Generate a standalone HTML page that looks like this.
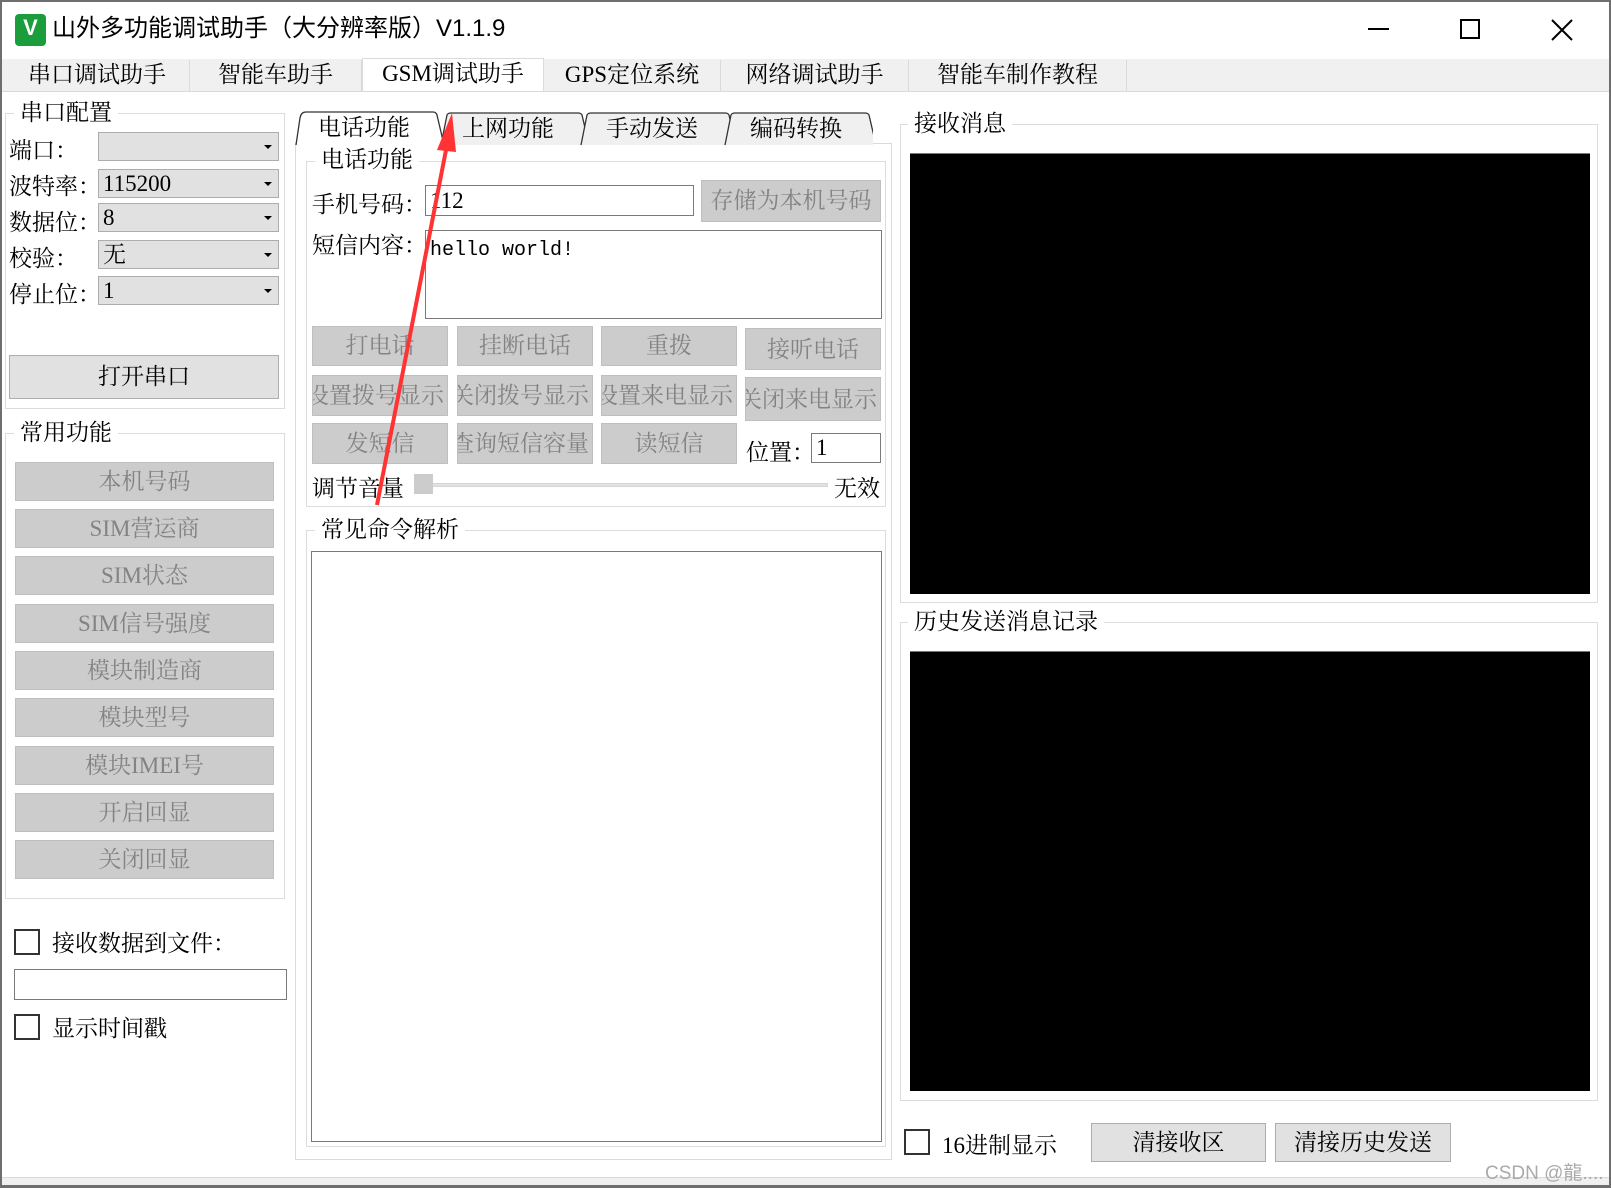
<!DOCTYPE html>
<html><head><meta charset="utf-8"><style>
*{box-sizing:border-box;margin:0;padding:0}
body{width:1611px;height:1188px;position:relative;background:#fff;overflow:hidden;font-family:"Liberation Serif","Noto Serif CJK SC",serif;font-size:23px;color:#000}
.a{position:absolute;white-space:nowrap}
.grp{position:absolute;border:1px solid #dcdcdc}
.gl{position:absolute;background:#fff;padding:0 6px;line-height:26px;font-size:23px}
.cb{position:absolute;background:#e1e1e1;border:1px solid #adadad;height:29px;left:98px;width:181px;line-height:27px;padding-left:4px;font-size:23px}
.cb:after{content:"";position:absolute;right:6px;top:12px;border:4px solid transparent;border-top:4px solid #000}
.db{position:absolute;background:#cccccc;border:1px solid #bfbfbf;color:#838383;text-align:center;font-size:23px;overflow:hidden}
.bt{position:absolute;background:#e1e1e1;border:1px solid #adadad;text-align:center;font-size:23px}
.chk{position:absolute;width:26px;height:26px;border:2px solid #333;background:#fff}
.inp{position:absolute;border:1px solid #7a7a7a;background:#fff}
.tab{position:absolute;top:60px;height:31px;background:#f0f0f0;border-right:1px solid #dadada;text-align:center;line-height:30px;font-size:23px}
</style></head><body>
<div class="a" style="left:0;top:0;width:1611px;height:1188px;border:2px solid #6e6e6e;border-bottom-width:3px"></div>
<div class="a" style="left:2px;top:59px;width:1607px;height:33px;background:#f0f0f0"></div>
<div class="a" style="left:2px;top:1177px;width:1607px;height:8px;background:#f0f0f0;border-top:1px solid #dadada"></div>
<div class="a" style="left:15px;top:14px;width:31px;height:32px;background:#1a9d3a;border-radius:4px;color:#fff;font:bold 22px 'Liberation Sans';text-align:center;line-height:28px">V</div>
<div class="a" style="left:52px;top:12px;font-family:'Liberation Sans','Noto Sans CJK SC',sans-serif;font-size:24px;line-height:34px">山外多功能调试助手（大分辨率版）V1.1.9</div>
<div class="a" style="left:1368px;top:28px;width:21px;height:2px;background:#000"></div>
<div class="a" style="left:1460px;top:19px;width:20px;height:20px;border:2px solid #000"></div>
<svg class="a" style="left:1551px;top:19px" width="22" height="22"><path d="M1 1L21 21M21 1L1 21" stroke="#000" stroke-width="2"/></svg>
<div class="tab" style="left:5px;width:185px">串口调试助手</div>
<div class="tab" style="left:190px;width:172px">智能车助手</div>
<div class="tab" style="left:362px;top:58px;height:34px;width:182px;background:#fff;border:1px solid #dadada;border-bottom:none">GSM调试助手</div>
<div class="tab" style="left:544px;width:177px">GPS定位系统</div>
<div class="tab" style="left:721px;width:188px">网络调试助手</div>
<div class="tab" style="left:909px;width:218px">智能车制作教程</div>
<div class="a" style="left:2px;top:91px;width:1607px;height:1px;background:#dadada"></div>
<div class="grp" style="left:5px;top:113px;width:280px;height:296px"></div>
<div class="gl" style="left:14px;top:100px">串口配置</div>
<div class="a" style="left:9px;top:132px">端口：</div><div class="cb" style="top:132px"></div>
<div class="a" style="left:9px;top:168px">波特率：</div><div class="cb" style="top:169px">115200</div>
<div class="a" style="left:9px;top:204px">数据位：</div><div class="cb" style="top:203px">8</div>
<div class="a" style="left:9px;top:240px">校验：</div><div class="cb" style="top:240px">无</div>
<div class="a" style="left:9px;top:276px">停止位：</div><div class="cb" style="top:276px">1</div>
<div class="bt" style="left:9px;top:355px;width:270px;height:44px;line-height:42px">打开串口</div>
<div class="grp" style="left:5px;top:433px;width:280px;height:466px"></div>
<div class="gl" style="left:14px;top:420px">常用功能</div>
<div class="db" style="left:15px;top:462px;width:259px;height:39px;line-height:37px">本机号码</div>
<div class="db" style="left:15px;top:509px;width:259px;height:39px;line-height:37px">SIM营运商</div>
<div class="db" style="left:15px;top:556px;width:259px;height:39px;line-height:37px">SIM状态</div>
<div class="db" style="left:15px;top:604px;width:259px;height:39px;line-height:37px">SIM信号强度</div>
<div class="db" style="left:15px;top:651px;width:259px;height:39px;line-height:37px">模块制造商</div>
<div class="db" style="left:15px;top:698px;width:259px;height:39px;line-height:37px">模块型号</div>
<div class="db" style="left:15px;top:746px;width:259px;height:39px;line-height:37px">模块IMEI号</div>
<div class="db" style="left:15px;top:793px;width:259px;height:39px;line-height:37px">开启回显</div>
<div class="db" style="left:15px;top:840px;width:259px;height:39px;line-height:37px">关闭回显</div>
<div class="chk" style="left:14px;top:929px"></div><div class="a" style="left:52px;top:925px">接收数据到文件：</div>
<div class="inp" style="left:14px;top:969px;width:273px;height:31px"></div>
<div class="chk" style="left:14px;top:1014px"></div><div class="a" style="left:52px;top:1010px">显示时间戳</div>
<div class="a" style="left:295px;top:143px;width:597px;height:1017px;border:1px solid #dadada"></div>
<svg class="a" style="left:293px;top:110px" width="580" height="36">
<g fill="#f0f0f0" stroke="#333" stroke-width="1.3">
<path d="M148 35L154 5Q155 3 158 3H285Q288 3 289 5L296 35"/>
<path d="M288 35L294 5Q295 3 298 3H432Q435 3 436 5L443 35"/>
<path d="M432 35L438 5Q439 3 442 3H572Q575 3 576 5L583 35"/>
<path d="M3 35L7 8Q8 2 13 2H140Q143 2 144 5L151 35" fill="#fff"/>
</g></svg>
<div class="a" style="left:318px;top:109px">电话功能</div>
<div class="a" style="left:462px;top:110px">上网功能</div>
<div class="a" style="left:606px;top:110px">手动发送</div>
<div class="a" style="left:750px;top:110px">编码转换</div>
<div class="grp" style="left:306px;top:161px;width:580px;height:346px"></div>
<div class="gl" style="left:315px;top:147px">电话功能</div>
<div class="a" style="left:312px;top:186px">手机号码：</div>
<div class="inp" style="left:425px;top:185px;width:269px;height:31px;padding-left:4px;line-height:29px">112</div>
<div class="db" style="left:701px;top:180px;width:180px;height:42px;line-height:40px">存储为本机号码</div>
<div class="a" style="left:312px;top:227px">短信内容：</div>
<div class="inp" style="left:425px;top:230px;width:457px;height:89px;padding:8px 4px;font-family:'Liberation Mono',monospace;font-size:20px">hello world!</div>
<div class="db" style="left:312px;top:326px;width:136px;height:40px;line-height:38px">打电话</div>
<div class="db" style="left:457px;top:326px;width:136px;height:40px;line-height:38px">挂断电话</div>
<div class="db" style="left:601px;top:326px;width:136px;height:40px;line-height:38px">重拨</div>
<div class="db" style="left:745px;top:328px;width:136px;height:42px;line-height:42px">接听电话</div>
<div class="db" style="left:312px;top:375px;width:136px;height:41px;line-height:39px;text-indent:-10px">设置拨号显示</div>
<div class="db" style="left:457px;top:375px;width:136px;height:41px;line-height:39px;text-indent:-10px">关闭拨号显示</div>
<div class="db" style="left:601px;top:375px;width:136px;height:41px;line-height:39px;text-indent:-10px">设置来电显示</div>
<div class="db" style="left:745px;top:377px;width:136px;height:44px;line-height:44px;text-indent:-10px">关闭来电显示</div>
<div class="db" style="left:312px;top:423px;width:136px;height:41px;line-height:39px">发短信</div>
<div class="db" style="left:457px;top:423px;width:136px;height:41px;line-height:39px;text-indent:-10px">查询短信容量</div>
<div class="db" style="left:601px;top:423px;width:136px;height:41px;line-height:39px">读短信</div>
<div class="a" style="left:746px;top:434px">位置：</div>
<div class="inp" style="left:811px;top:433px;width:70px;height:30px;padding-left:4px;line-height:28px">1</div>
<div class="a" style="left:312px;top:470px">调节音量</div>
<div class="a" style="left:414px;top:483px;width:414px;height:4px;background:#e1e1e1;border:1px solid #d6d6d6"></div>
<div class="a" style="left:414px;top:474px;width:19px;height:20px;background:#cccccc"></div>
<div class="a" style="left:834px;top:470px">无效</div>
<div class="grp" style="left:306px;top:530px;width:580px;height:617px"></div>
<div class="gl" style="left:315px;top:517px">常见命令解析</div>
<div class="a" style="left:311px;top:551px;width:571px;height:591px;border:1px solid #7a7a7a"></div>
<div class="grp" style="left:900px;top:124px;width:698px;height:479px"></div>
<div class="gl" style="left:908px;top:111px">接收消息</div>
<div class="a" style="left:910px;top:153px;width:680px;height:441px;background:#000;border-top:1px solid #777"></div>
<div class="grp" style="left:900px;top:622px;width:698px;height:479px"></div>
<div class="gl" style="left:908px;top:609px">历史发送消息记录</div>
<div class="a" style="left:910px;top:651px;width:680px;height:440px;background:#000;border-top:1px solid #777"></div>
<div class="chk" style="left:904px;top:1129px"></div><div class="a" style="left:942px;top:1127px">16进制显示</div>
<div class="bt" style="left:1091px;top:1123px;width:175px;height:39px;line-height:37px">清接收区</div>
<div class="bt" style="left:1275px;top:1123px;width:176px;height:39px;line-height:37px">清接历史发送</div>
<div class="a" style="left:1485px;top:1158px;color:#aaa;font-family:'Liberation Sans','Noto Sans CJK SC',sans-serif;font-size:19px">CSDN @龍....</div>
<svg class="a" style="left:0;top:0" width="1611" height="1188"><path d="M377 505L446 150" stroke="#f33" stroke-width="4"/><path d="M452 113L437 150L456 152Z" fill="#f33"/></svg>
</body></html>
